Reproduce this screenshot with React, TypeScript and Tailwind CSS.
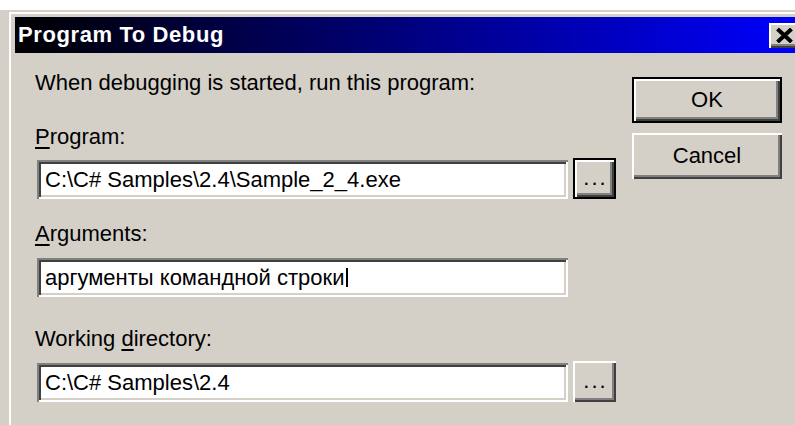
import React from "react";

const raised =
  "shadow-[inset_2px_2px_0_#ffffff,inset_-2px_-2px_0_#404040,inset_-4px_-4px_0_#808080]";
const raisedDefault =
  "shadow-[inset_0_0_0_2px_#000000,inset_4px_4px_0_#ffffff,inset_-4px_-4px_0_#404040,inset_-6px_-6px_0_#808080]";
const sunken =
  "shadow-[inset_2px_2px_0_#808080,inset_-2px_-2px_0_#ffffff,inset_4px_4px_0_#404040,inset_-4px_-4px_0_#d4d0c8]";

function Field({ children }: { children: React.ReactNode }) {
  return (
    <div className={`ml-[2px] flex h-[39px] w-[531px] items-center bg-white pl-[8px] ${sunken}`}>
      {children}
    </div>
  );
}

function BrowseButton({ isDefault }: { isDefault?: boolean }) {
  return (
    <div
      className={`ml-[5px] flex h-[41px] w-[43px] items-center justify-center bg-[#d4d0c8] pb-[2px] pl-[2px] tracking-[2px] ${
        isDefault ? raisedDefault : raised
      }`}
    >
      ...
    </div>
  );
}

function DialogButton({ label, isDefault }: { label: string; isDefault?: boolean }) {
  return (
    <div
      className={`flex h-[46px] w-[150px] items-center justify-center bg-[#d4d0c8] ${
        isDefault ? raisedDefault : raised
      }`}
    >
      {label}
    </div>
  );
}

export default function App() {
  return (
    <div className="h-[425px] w-[795px] overflow-hidden bg-white font-['Liberation_Sans',Arial,sans-serif] text-[22px] leading-[26px] text-black">
      <div className="mt-[10px] h-[415px] bg-[#d4d0c8] pl-[9px] pt-[2px]">
        <div className="h-full w-[800px] border-l-2 border-t-2 border-white pl-[4px] pt-[3px]">
          {/* caption bar */}
          <div className="flex h-[36px] w-[790px] items-center justify-between bg-[linear-gradient(to_right,#000000,#0000ff)]">
            <span className="pl-[3px] font-bold tracking-[0.6px] text-white">Program To Debug</span>
            <div className={`mr-[4px] flex h-[25px] w-[32px] items-start bg-[#d4d0c8] pl-[7px] pt-[5px] ${raised}`}>
              <svg width="17" height="15" viewBox="0 0 17 15">
                <path d="M1.5 1 L15.5 14 M15.5 1 L1.5 14" stroke="#000" strokeWidth="4" />
              </svg>
            </div>
          </div>

          {/* dialog body */}
          <div className="flex items-start">
            <div className="flex w-[601px] flex-col pl-[20px]">
              <div className="mt-[17px]">When debugging is started, run this program:</div>

              <div className="mt-[28px]">
                <u className="decoration-2 underline-offset-[3px]">P</u>rogram:
              </div>
              <div className="mt-[8px] flex items-end">
                <Field>C:\C# Samples\2.4\Sample_2_4.exe</Field>
                <BrowseButton isDefault />
              </div>

              <div className="mt-[22px]">
                <u className="decoration-2 underline-offset-[3px]">A</u>rguments:
              </div>
              <div className="mt-[11px]">
                <Field>
                  <span>аргументы командной строки</span>
                  <span className="ml-[2px] inline-block h-[19px] w-[2px] bg-black" />
                </Field>
              </div>

              <div className="mt-[29px]">
                Working <u className="decoration-2 underline-offset-[3px]">d</u>irectory:
              </div>
              <div className="mt-[9px] flex items-end">
                <Field>C:\C# Samples\2.4</Field>
                <BrowseButton />
              </div>
            </div>

            <div className="ml-[16px] mt-[24px] flex flex-col gap-[10px]">
              <DialogButton label="OK" isDefault />
              <DialogButton label="Cancel" />
            </div>
          </div>
        </div>
      </div>
    </div>
  );
}
